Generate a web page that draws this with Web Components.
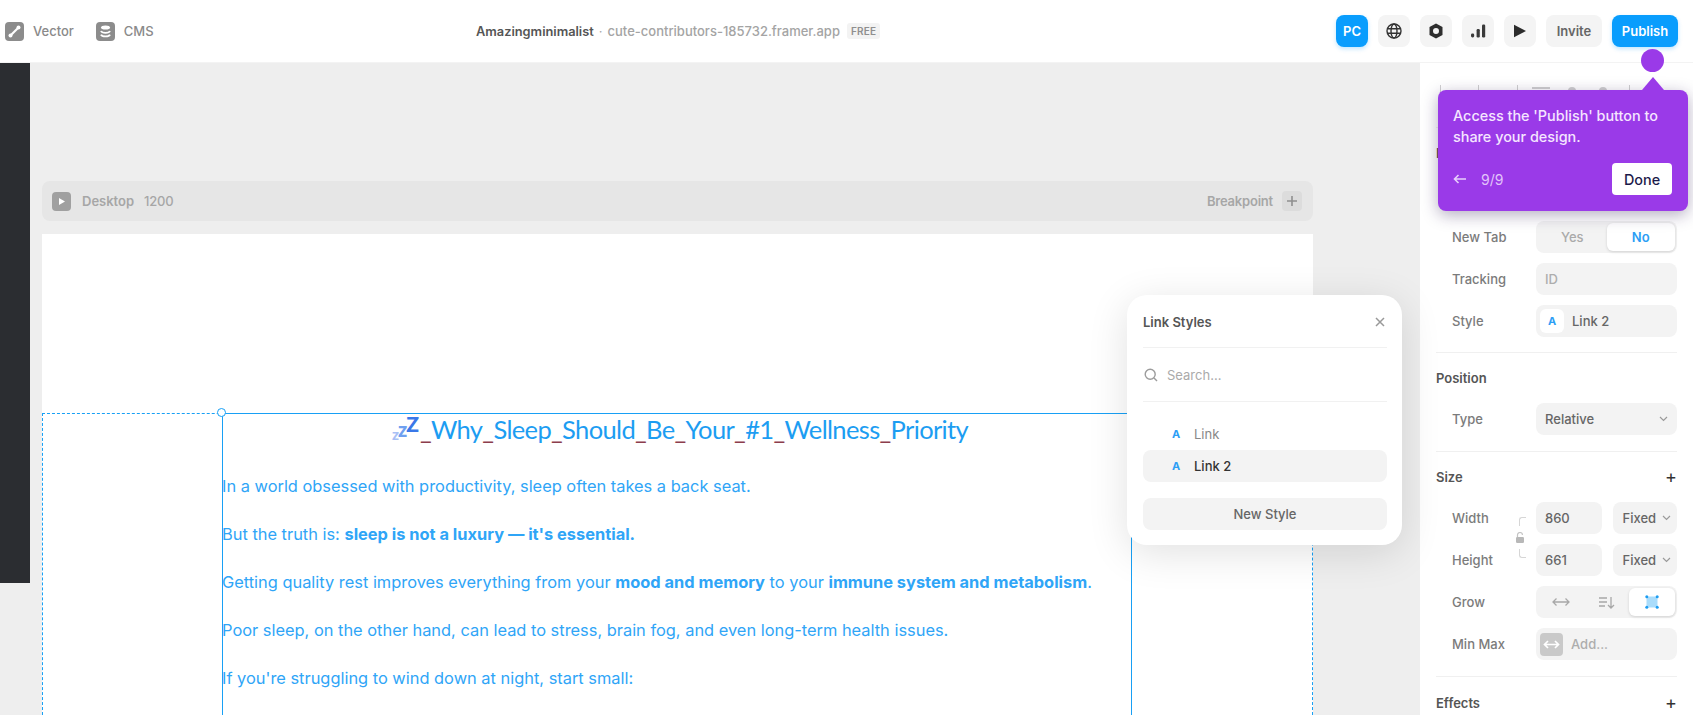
<!DOCTYPE html>
<html>
<head>
<meta charset="utf-8">
<title>Framer editor</title>
<style>
  html, body { margin: 0; height: 100%; background: #fff; overflow: hidden; }
  body { font-family: Inter, "Liberation Sans", sans-serif; font-size: 13px; color: #555; }
</style>
</head>
<body>
<editor-app>
  <top-bar></top-bar>
  <editor-canvas></editor-canvas>
  <props-panel></props-panel>
  <link-styles></link-styles>
  <tour-tip></tour-tip>
</editor-app>

<script>
// small helper, every element here is just markup + styles in an open shadow root
function component(name, html) {
  const tpl = document.createElement("template");
  tpl.innerHTML = html;
  customElements.define(name, class extends HTMLElement {
    constructor() {
      super();
      this.attachShadow({ mode: "open" }).appendChild(tpl.content.cloneNode(true));
    }
  });
}

component("editor-app", `
  <style>
    :host {
      display: grid;
      grid-template-columns: 1420px 273px;
      grid-template-rows: 63px 652px;
      width: 1693px;
      height: 715px;
      position: relative;
      overflow: hidden;
    }
    ::slotted(top-bar) { grid-column: 1 / 3; }
  </style>
  <slot></slot>
`);

component("tool-button", `
  <style>
    :host {
      display: flex;
      align-items: center;
      justify-content: center;
      width: 32px;
      height: 32px;
      border-radius: 8px;
      background: #f4f4f4;
      color: #666;
      font-weight: 600;
      font-size: 13px;
    }
    :host([primary]) { background: #099dfd; color: #fff; box-shadow: 0 2px 4px rgba(9,157,253,.25); }
    :host([invite]) { width: 56px; }
    :host([publish]) { width: 66px; }
  </style>
  <slot></slot>
`);

component("top-bar", `
  <style>
    :host {
      display: grid;
      grid-template-columns: 471px auto 1fr;
      align-items: center;
      background: #fff;
      border-bottom: 1px solid #f3f3f3;
      box-sizing: border-box;
      padding: 0 15px 0 5px;
    }
    .left, .right { display: flex; align-items: center; }
    .left { gap: 9px; color: #8a8a8a; font-weight: 500; }
    .left span { margin-right: 13px; }
    .right { justify-content: flex-end; gap: 10px; }
    .badge { width: 19px; height: 19px; border-radius: 4px; background: #8c8c8c; display: block; }
    .mid { display: flex; align-items: center; white-space: nowrap; }
    b { font-weight: 600; color: #555; font-size: 12.8px; }
    .dot { margin: 0 5px; color: #aaa; }
    .url { color: #a4a4a4; font-weight: 500; }
    .free {
      margin-left: 7px;
      background: #f3f3f3;
      color: #8f8f8f;
      border-radius: 3px;
      font-size: 10px;
      font-weight: 600;
      padding: 2px 4px;
      letter-spacing: .2px;
    }
    svg { display: block; }
  </style>
  <div class="left">
    <svg class="badge" viewBox="0 0 19 19">
      <path d="M14 5 L5 14" stroke="#fff" stroke-width="2.2" />
      <circle cx="13.5" cy="5.5" r="2" fill="#fff" /><circle cx="5.5" cy="13.5" r="2" fill="#fff" />
    </svg>
    <span>Vector</span>
    <svg class="badge" viewBox="0 0 19 19">
      <ellipse cx="9.5" cy="5.5" rx="4.5" ry="2" fill="#fff" />
      <path d="M5 9c1 2.4 8 2.4 9 0M5 12.6c1 2.4 8 2.4 9 0" fill="none" stroke="#fff" stroke-width="1.8" />
    </svg>
    <span>CMS</span>
  </div>
  <div class="mid">
    <b>Amazingminimalist</b><span class="dot">·</span><span class="url">cute-contributors-185732.framer.app</span><span class="free">FREE</span>
  </div>
  <div class="right">
    <tool-button primary>PC</tool-button>
    <tool-button>
      <svg width="16" height="16" viewBox="0 0 16 16" fill="none" stroke="#333" stroke-width="1.4">
        <circle cx="8" cy="8" r="7" /><ellipse cx="8" cy="8" rx="3" ry="7" /><path d="M1 5.8h14M1 10.2h14" />
      </svg>
    </tool-button>
    <tool-button>
      <svg width="16" height="16" viewBox="0 0 16 16">
        <path fill="#2e2e2e" fill-rule="evenodd" d="M8 .6 14.5 4v8L8 15.4 1.5 12V4zM8 5a3 3 0 1 0 0 6 3 3 0 0 0 0-6z" />
      </svg>
    </tool-button>
    <tool-button>
      <svg width="16" height="16" viewBox="0 0 16 16" fill="#3a3a3a">
        <rect x="1" y="10.5" width="3.2" height="4" rx="1.4" /><rect x="6.6" y="6" width="3.2" height="8.5" rx="1.2" /><rect x="12" y="1.5" width="3.2" height="13" rx="1.2" />
      </svg>
    </tool-button>
    <tool-button>
      <svg width="14" height="14" viewBox="0 0 14 14"><path fill="#2b2b2b" d="M1 .8 13 7 1 13.2z" /></svg>
    </tool-button>
    <tool-button invite>Invite</tool-button>
    <tool-button primary publish>Publish</tool-button>
  </div>
`);

component("editor-canvas", `
  <style>
    :host {
      display: flex;
      flex-direction: column;
      background: #eee;
      box-sizing: border-box;
      padding: 118px 107px 0 42px;
      position: relative;
      overflow: hidden;
    }
    .strip { position: absolute; left: 0; top: 0; width: 30px; height: 520px; background: #2b2d31; }
    .bar {
      display: flex;
      align-items: center;
      height: 40px;
      flex: none;
      padding: 0 11px 0 10px;
      border-radius: 8px;
      background: #e6e6e6;
      color: #a6a6a6;
      font-weight: 600;
    }
    .play { width: 19px; height: 19px; border-radius: 4px; background: #a0a0a0; margin-right: 11px; display: block; }
    .size { margin-left: 10px; font-weight: 500; letter-spacing: -.2px; }
    .gap { flex: 1; }
    .bp { letter-spacing: -.2px; }
    .plus { width: 20px; height: 20px; margin-left: 9px; border-radius: 4px; background: #dcdcdc; display: block; }
    canvas-frame { margin-top: 13px; flex: 1; min-height: 0; }
  </style>
  <div class="strip"></div>
  <div class="bar">
    <svg class="play" viewBox="0 0 19 19"><path fill="#fff" d="M7 6l6 3.5L7 13z" /></svg>
    <span>Desktop</span><span class="size">1200</span>
    <span class="gap"></span>
    <span class="bp">Breakpoint</span>
    <svg class="plus" viewBox="0 0 20 20"><path stroke="#8f8f8f" stroke-width="1.6" d="M10 5v10M5 10h10" /></svg>
  </div>
  <canvas-frame></canvas-frame>
`);

component("canvas-frame", `
  <style>
    :host { display: block; background: #fff; padding-top: 179px; overflow: hidden; position: relative; }
    .guide {
      height: 100%;
      box-sizing: border-box;
      border: 1px dashed #18a0f5;
      border-bottom: 0;
      padding-left: 179px;
      position: relative;
    }
    .box {
      width: 910px;
      height: 700px;
      box-sizing: border-box;
      border: 1px solid #18a0f5;
      margin-top: -1px;
      color: #2fa5f7;
      font-family: Inter, "Liberation Sans", sans-serif;
      font-size: 16.4px;
      line-height: 24px;
    }
    .handle {
      position: absolute;
      left: 174px;
      top: -6px;
      width: 7px;
      height: 7px;
      border: 1px solid #18a0f5;
      border-radius: 50%;
      background: #fff;
    }
    h1 {
      margin: -1px 0 29px;
      padding-left: 6px;
      font-family: Lato, "Liberation Sans", sans-serif;
      font-size: 25.5px;
      letter-spacing: -.65px;
      line-height: 32px;
      font-weight: 400;
      text-align: center;
      color: #1c9df2;
      white-space: nowrap;
    }
    h1 i { font-style: normal; color: #8c3d4c; }
    .zzz { font-weight: 900; margin-right: 2px; line-height: 0; letter-spacing: -1px; }
    .zzz span:nth-child(1) { font-size: 15px; color: #a9c0f5; vertical-align: -1px; }
    .zzz span:nth-child(2) { font-size: 20px; color: #6fa0f0; vertical-align: 2px; }
    .zzz span:nth-child(3) { font-size: 21px; color: #3a78e8; vertical-align: 7px; }
    p { margin: 0 0 24px -1px; white-space: nowrap; }
    b { font-weight: 700; }
  </style>
  <div class="guide">
    <div class="box">
      <h1><span class="zzz"><span>z</span><span>z</span><span>Z</span></span><i>_</i>Why<i>_</i>Sleep<i>_</i>Should<i>_</i>Be<i>_</i>Your<i>_</i>#1<i>_</i>Wellness<i>_</i>Priority</h1>
      <p>In a world obsessed with productivity, sleep often takes a back seat.</p>
      <p>But the truth is: <b>sleep is not a luxury — it's essential.</b></p>
      <p>Getting quality rest improves everything from your <b>mood and memory</b> to your <b>immune system and metabolism</b>.</p>
      <p>Poor sleep, on the other hand, can lead to stress, brain fog, and even long-term health issues.</p>
      <p>If you're struggling to wind down at night, start small:</p>
    </div>
    <div class="handle"></div>
  </div>
`);

component("prop-section", `
  <style>
    :host { display: block; padding: 15px 0 16px; border-bottom: 1px solid #f0f0f0; position: relative; }
    :host([last]) { border-bottom: 0; padding-top: 16px; }
    :host([first]) { padding-top: 15px; padding-bottom: 15px; }
    .head { display: flex; justify-content: space-between; align-items: center; height: 20px; margin-bottom: 15px; font-weight: 600; color: #555; }
    :host([first]) .head { margin-bottom: 16px; }
    .body { display: flex; flex-direction: column; gap: 10px; }
    .plus { font-size: 18px; font-weight: 400; color: #333; line-height: 20px; }
  </style>
  <div class="head"><span id="title"></span><span class="plus" id="plus"></span></div>
  <div class="body"><slot></slot></div>
`);

component("prop-row", `
  <style>
    :host {
      display: grid;
      grid-template-columns: 84px 141px;
      align-items: center;
      height: 32px;
      padding-left: 16px;
      color: #7b7b7b;
      font-weight: 500;
    }
    .ctl { display: flex; gap: 11px; height: 32px; }
    ::slotted(*) { flex: 1; min-width: 0; }
    ::slotted([slot="label"]) { margin-top: -1px; }
  </style>
  <slot name="label"></slot>
  <div class="ctl"><slot></slot></div>
`);

component("prop-field", `
  <style>
    :host {
      display: flex;
      align-items: center;
      justify-content: space-between;
      box-sizing: border-box;
      background: #f3f3f3;
      border-radius: 8px;
      padding: 0 9px;
      color: #666;
      font-weight: 500;
      font-size: 13px;
      gap: 6px;
    }
    :host([muted]) { color: #adadad; }
    :host([icon]) { padding: 0 4px; justify-content: flex-start; gap: 8px; }
    :host([compact]) { padding: 0 7px 0 10px; }
    svg { display: block; flex: none; }
    .chev { display: none; }
    :host([select]) .chev { display: block; }
  </style>
  <slot></slot>
  <svg class="chev" width="9" height="6" viewBox="0 0 9 6" fill="none" stroke="#9a9a9a" stroke-width="1.2"><path d="M1 1l3.5 3.5L8 1" /></svg>
`);

component("seg-control", `
  <style>
    :host {
      display: grid;
      grid-auto-flow: column;
      grid-auto-columns: 1fr;
      align-items: stretch;
      box-sizing: border-box;
      background: #f3f3f3;
      border-radius: 8px;
      padding: 2px;
    }
    ::slotted(*) {
      display: flex;
      align-items: center;
      justify-content: center;
      border-radius: 6px;
      color: #aaa;
      font-weight: 500;
    }
    ::slotted(.on) { background: #fff; color: #2c9ef5; font-weight: 600; box-shadow: 0 1px 3px rgba(0,0,0,.14); }
  </style>
  <slot></slot>
`);

component("props-panel", `
  <style>
    :host { display: block; background: #fff; box-sizing: border-box; padding: 0 16px; overflow: hidden; position: relative; }
    .tools { display: flex; align-items: flex-start; height: 42px; padding: 22px 0 0 4px; border-bottom: 1px solid #f0f0f0; }
    .tools i { display: block; width: 1px; height: 12px; background: #cfcfcf; flex: none; }
    .tools em { display: block; width: 18px; height: 2px; margin-top: 2px; background: #cfcfcf; flex: none; }
    .tools u { display: block; width: 8px; height: 8px; margin-top: 2px; border-radius: 50%; background: #cfcfcf; flex: none; }
    .bracket { position: absolute; left: 83px; width: 7px; height: 9px; border: 1px solid #d6d6d6; border-right: 0; box-sizing: border-box; }
    .bracket.up { top: 65px; border-bottom: 0; border-radius: 3px 0 0 0; }
    .bracket.down { top: 97px; border-top: 0; border-radius: 0 0 0 3px; }
    .padlock { position: absolute; left: 79px; top: 80px; display: block; }
    .a { width: 24px; height: 24px; border-radius: 6px; background: #fff; color: #2c9ef5; font-size: 11px; font-weight: 700; display: flex; align-items: center; justify-content: center; flex: none; }
    .mm { width: 23px; height: 23px; border-radius: 4px; background: #c9c9c9; display: block; flex: none; }
    svg { display: block; }
  </style>
  <div class="tools">
    <i></i><i style="margin-left:37px"></i><i style="margin-left:38px"></i>
    <em style="margin-left:14px"></em><u style="margin-left:18px"></u><u style="margin-left:23px"></u>
    <i style="margin-left:22px"></i>
  </div>

  <prop-section title="Link" first>
    <prop-row><span slot="label">Link</span><prop-field muted>Add...</prop-field></prop-row>
    <prop-row><span slot="label">New Tab</span><seg-control><span>Yes</span><span class="on">No</span></seg-control></prop-row>
    <prop-row><span slot="label">Tracking</span><prop-field muted>ID</prop-field></prop-row>
    <prop-row><span slot="label">Style</span><prop-field icon><span class="a">A</span><span>Link 2</span></prop-field></prop-row>
  </prop-section>

  <prop-section title="Position">
    <prop-row><span slot="label">Type</span><prop-field select>Relative</prop-field></prop-row>
  </prop-section>

  <prop-section title="Size" plus>
    <prop-row><span slot="label">Width</span><prop-field>860</prop-field><prop-field select compact>Fixed</prop-field></prop-row>
    <prop-row><span slot="label">Height</span><prop-field>661</prop-field><prop-field select compact>Fixed</prop-field></prop-row>
    <prop-row><span slot="label">Grow</span>
      <seg-control>
        <span><svg width="18" height="10" viewBox="0 0 18 10" fill="none" stroke="#a8a8a8" stroke-width="1.3"><path d="M1 5h16M4.500 1.500 1 5l3.500 3.500M13.500 1.500 17 5l-3.500 3.500" /></svg></span>
        <span><svg width="17" height="13" viewBox="0 0 17 13" fill="none" stroke="#a8a8a8" stroke-width="1.3"><path d="M1 2h8M1 6h8M1 10h6M13 1v11M10 9l3 3 3-3" /></svg></span>
        <span class="on"><svg width="14" height="14" viewBox="0 0 14 14"><rect x="1.500" y="1.500" width="11" height="11" fill="#a9dcfb" /><g fill="#1c9df2"><circle cx="1.800" cy="1.800" r="1.500" /><circle cx="12.200" cy="1.800" r="1.500" /><circle cx="1.800" cy="12.200" r="1.500" /><circle cx="12.200" cy="12.200" r="1.500" /></g></svg></span>
      </seg-control>
    </prop-row>
    <prop-row><span slot="label">Min Max</span>
      <prop-field muted icon>
        <svg class="mm" viewBox="0 0 23 23" fill="none" stroke="#fff" stroke-width="1.700"><path d="M5 11.500h13M8 8l-3.500 3.500L8 15M15 8l3.500 3.500L15 15" /></svg>
        <span>Add...</span>
      </prop-field>
    </prop-row>
    <div class="bracket up"></div>
    <svg class="padlock" width="10" height="11" viewBox="0 0 10 11" fill="none"><path d="M2.500 5V3a2.500 2.500 0 0 1 5 0" stroke="#c4c4c4" stroke-width="1.200" /><rect x="1" y="5" width="8" height="6" rx="1.200" fill="#b8b8b8" /></svg>
    <div class="bracket down"></div>
  </prop-section>

  <prop-section title="Effects" plus last></prop-section>
`);

component("link-styles", `
  <style>
    :host {
      position: absolute;
      left: 1127px;
      top: 295px;
      width: 275px;
      height: 250px;
      box-sizing: border-box;
      padding: 0 15px 0 16px;
      background: #fff;
      border-radius: 20px;
      box-shadow: 0 8px 40px rgba(0,0,0,.12);
      display: flex;
      flex-direction: column;
    }
    .head { display: flex; align-items: center; justify-content: space-between; height: 53px; padding-top: 1px; box-sizing: border-box; border-bottom: 1px solid #f1f1f1; font-weight: 600; color: #555; flex: none; }
    .search { display: flex; align-items: center; gap: 9px; height: 53px; border-bottom: 1px solid #f1f1f1; color: #aaa; font-weight: 400; flex: none; }
    .items { padding-top: 16px; display: flex; flex-direction: column; }
    .item { display: flex; align-items: center; height: 32px; border-radius: 8px; padding-left: 29px; gap: 13px; color: #888; }
    .item.on { background: #f3f3f3; color: #333; font-weight: 500; }
    .item b { color: #2c9ef5; font-size: 11px; font-weight: 700; width: 9px; }
    .new { margin-top: 16px; height: 32px; border-radius: 8px; background: #f3f3f3; display: flex; align-items: center; justify-content: center; font-weight: 500; color: #666; }
    svg { display: block; }
  </style>
  <div class="head">
    <span>Link Styles</span>
    <svg width="10" height="10" viewBox="0 0 10 10" stroke="#999" stroke-width="1.500" style="margin-right:2px"><path d="M1 1l8 8M9 1l-8 8" /></svg>
  </div>
  <div class="search">
    <svg width="14" height="14" viewBox="0 0 14 14" fill="none" stroke="#9c9c9c" stroke-width="1.400" style="margin-left:1px"><circle cx="6.200" cy="6.200" r="5" /><path d="M10 10l3 3" /></svg>
    <span>Search...</span>
  </div>
  <div class="items">
    <div class="item"><b>A</b><span>Link</span></div>
    <div class="item on"><b>A</b><span>Link 2</span></div>
  </div>
  <div class="new">New Style</div>
`);

component("tour-tip", `
  <style>
    :host {
      position: absolute;
      left: 1438px;
      top: 90px;
      width: 250px;
      height: 121px;
      box-sizing: border-box;
      padding: 15px 16px 16px 15px;
      background: #9a3ae8;
      border-radius: 8px;
      color: #f5e6ff;
      box-shadow: 0 4px 16px rgba(40,20,80,.35);
      font-family: Inter, "Liberation Sans", sans-serif;
      display: flex;
      flex-direction: column;
      justify-content: space-between;
    }
    .beacon { position: absolute; left: 203px; top: -41px; width: 23px; height: 23px; border-radius: 50%; background: #9a3ae8; }
    .arrow { position: absolute; left: 204px; top: -13px; width: 0; height: 0; border-style: solid; border-color: transparent; border-width: 0 11px 13px; border-bottom-color: #9a3ae8; }
    .msg { font-size: 14.4px; line-height: 21px; font-weight: 500; white-space: nowrap; }
    .foot { display: flex; align-items: center; font-size: 14px; color: #e2c4fa; }
    .foot svg { display: block; margin-right: 15px; }
    .done { margin-left: auto; background: #fff; color: #1c1a4a; border-radius: 4px; width: 60px; height: 32px; display: flex; align-items: center; justify-content: center; font-size: 14.4px; font-weight: 500; }
  </style>
  <div class="beacon"></div>
  <div class="arrow"></div>
  <div class="msg">Access the 'Publish' button to<br>share your design.</div>
  <div class="foot">
    <svg width="13" height="10" viewBox="0 0 13 10" fill="none" stroke="#e8cffb" stroke-width="1.600"><path d="M13 5H1.500M5.500 1 1.500 5l4 4" /></svg>
    <span>9/9</span>
    <span class="done">Done</span>
  </div>
`);

// fill in section heads from attributes
document.querySelector("props-panel").shadowRoot.querySelectorAll("prop-section").forEach((s) => {
  s.shadowRoot.getElementById("title").textContent = s.getAttribute("title");
  s.removeAttribute("title");
  if (s.hasAttribute("plus")) s.shadowRoot.getElementById("plus").textContent = "+";
});
</script>
</body>
</html>
